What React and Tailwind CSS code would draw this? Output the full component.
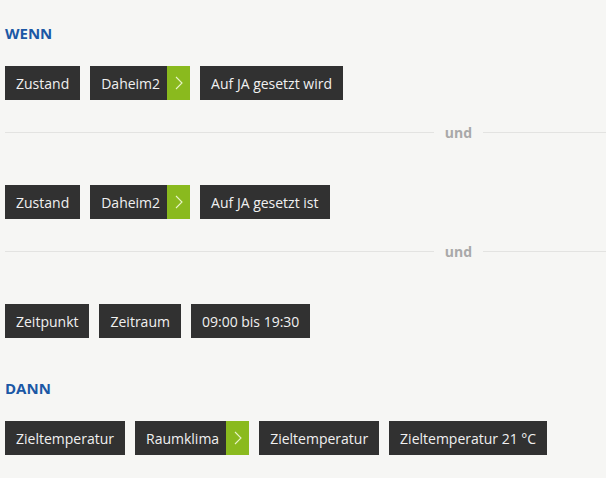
import React from "react";

const font = { fontFamily: '"Open Sans", "Noto Sans", sans-serif' };

function Chip({ children }) {
  return (
    <div className="flex h-[34px] items-center bg-[#313131] px-[11px] text-[14px] text-[#f0f0f0]">
      {children}
    </div>
  );
}

function LinkChip({ children }) {
  return (
    <div className="flex h-[34px] items-stretch">
      <div className="flex items-center bg-[#313131] pl-[11px] pr-[7px] text-[14px] text-[#f0f0f0]">{children}</div>
      <div className="flex w-[23px] items-center justify-center bg-[#8aba1e]">
        <svg width="8" height="14" viewBox="0 0 8 14" fill="none">
          <path d="M1 1l6 6-6 6" stroke="#e8f3c8" strokeWidth="1.1" />
        </svg>
      </div>
    </div>
  );
}

function Row({ children }) {
  return <div className="flex gap-[10px]">{children}</div>;
}

function Sep() {
  return (
    <div className="mt-[22px] mb-[43px] flex h-[20px] items-center">
      <div className="h-px flex-1 bg-[#e3e3e1]" />
      <div className="px-[11px] text-[14px] font-bold text-[#a9a9a9]">und</div>
      <div className="h-px w-[123px] bg-[#e3e3e1]" />
    </div>
  );
}

export default function App() {
  return (
    <div className="h-[478px] w-[606px] overflow-hidden bg-[#f6f6f4] pl-[5px]" style={font}>
      <div className="pt-[23px] h-[20px] box-content text-[15px] font-bold leading-[20px] text-[#1b58a5]">WENN</div>
      <div className="mt-[23px]">
        <Row>
          <Chip>Zustand</Chip>
          <LinkChip>Daheim2</LinkChip>
          <Chip>Auf JA gesetzt wird</Chip>
        </Row>
      </div>
      <Sep />
      <Row>
        <Chip>Zustand</Chip>
        <LinkChip>Daheim2</LinkChip>
        <Chip>Auf JA gesetzt ist</Chip>
      </Row>
      <Sep />
      <Row>
        <Chip>Zeitpunkt</Chip>
        <Chip>Zeitraum</Chip>
        <Chip>09:00 bis 19:30</Chip>
      </Row>
      <div className="mt-[40px] h-[20px] text-[15px] font-bold leading-[20px] text-[#1b58a5]">DANN</div>
      <div className="mt-[23px]">
        <Row>
          <Chip>Zieltemperatur</Chip>
          <LinkChip>Raumklima</LinkChip>
          <Chip>Zieltemperatur</Chip>
          <Chip>Zieltemperatur 21 °C</Chip>
        </Row>
      </div>
    </div>
  );
}
